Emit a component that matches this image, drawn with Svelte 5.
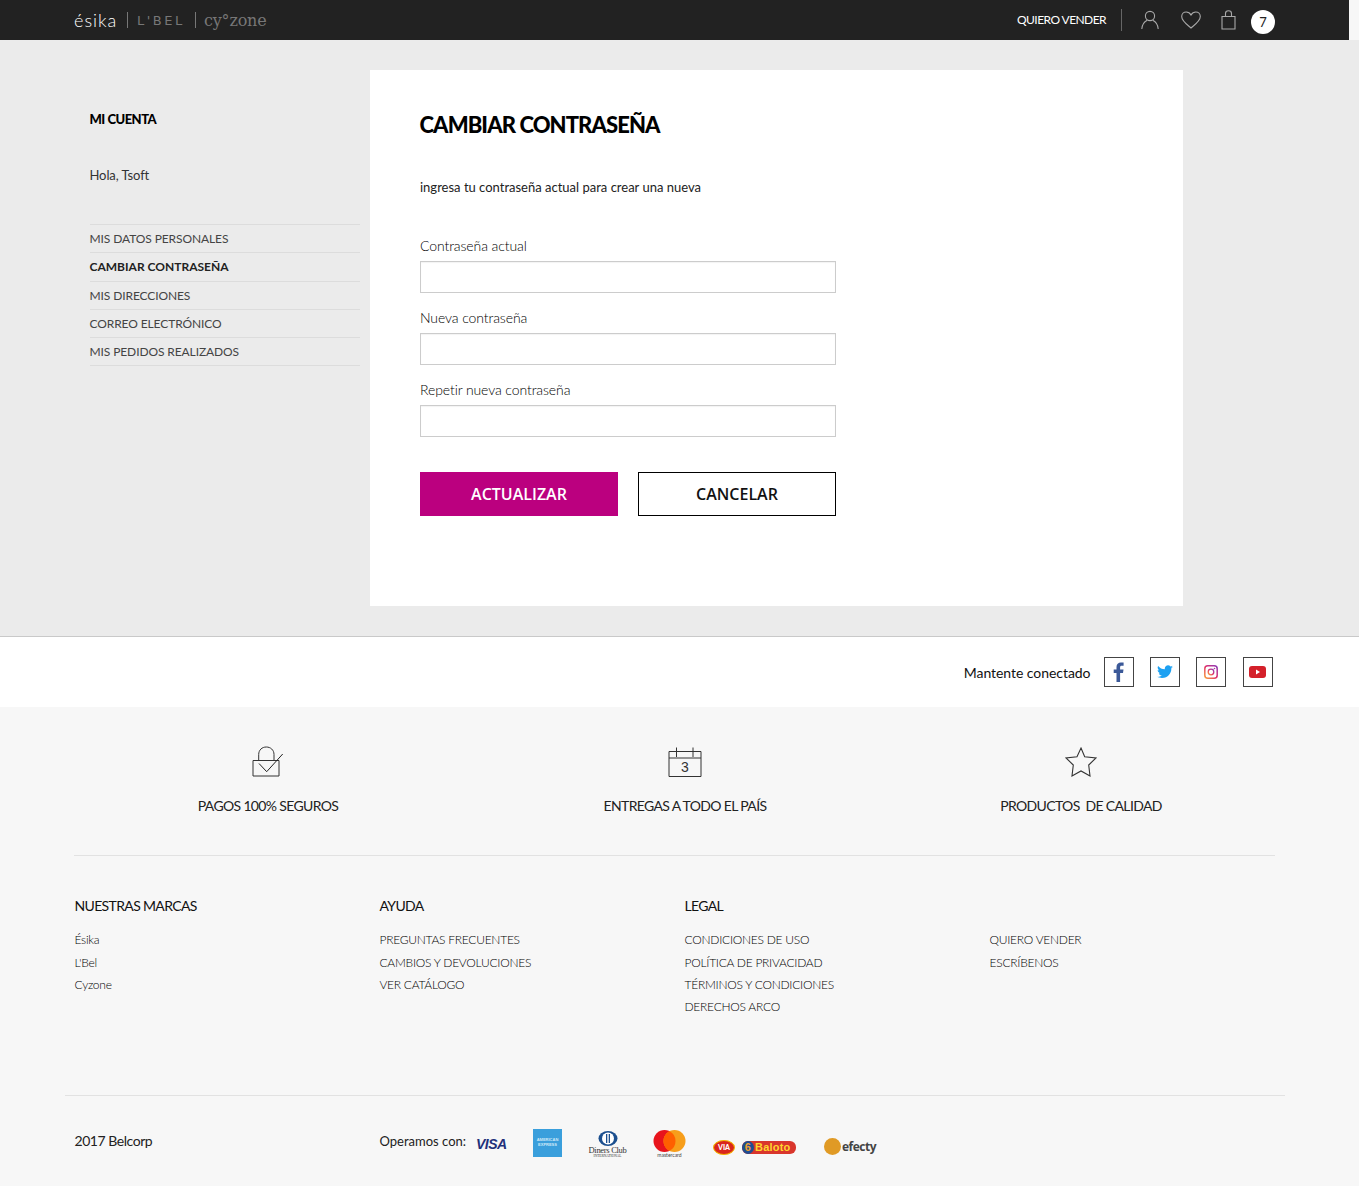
<script>
  const menu = [
    { label: 'MIS DATOS PERSONALES' },
    { label: 'CAMBIAR CONTRASEÑA', active: true },
    { label: 'MIS DIRECCIONES' },
    { label: 'CORREO ELECTRÓNICO' },
    { label: 'MIS PEDIDOS REALIZADOS' }
  ];
  const fields = ['Contraseña actual', 'Nueva contraseña', 'Repetir nueva contraseña'];
  const columns = [
    { title: 'NUESTRAS MARCAS', links: ['Ésika', "L'Bel", 'Cyzone'] },
    { title: 'AYUDA', links: ['PREGUNTAS FRECUENTES', 'CAMBIOS Y DEVOLUCIONES', 'VER CATÁLOGO'] },
    { title: 'LEGAL', links: ['CONDICIONES DE USO', 'POLÍTICA DE PRIVACIDAD', 'TÉRMINOS Y CONDICIONES', 'DERECHOS ARCO'] },
    { title: '', links: ['QUIERO VENDER', 'ESCRÍBENOS'] }
  ];
</script>

<header class="topbar">
  <div class="brands">
    <span class="esika">ésika</span>
    <span class="brand-sep"></span>
    <span class="lbel">L'BEL</span>
    <span class="brand-sep second"></span>
    <span class="cyzone">cy°zone</span>
  </div>
  <div class="tools">
    <span class="sell">QUIERO VENDER</span>
    <span class="tool-sep"></span>
    <svg class="user" width="18" height="20" viewBox="0 0 18 20" fill="none" stroke="#a9a9a9" stroke-width="1.1">
      <circle cx="9" cy="6" r="4.6" />
      <path d="M.8 19c.3-4.500 3-7.600 5.400-8.800M17.200 19c-.3-4.500-3-7.600-5.400-8.800" />
    </svg>
    <svg class="heart" width="20" height="18" viewBox="0 0 20 18" fill="none" stroke="#a9a9a9" stroke-width="1.1">
      <path d="M10 17C6 13.500.7 10 .7 5.500.7 2.800 2.800 1 5.200 1 7.200 1 9 2.200 10 4c1-1.800 2.800-3 4.800-3 2.400 0 4.500 1.800 4.500 4.500C19.300 10 14 13.500 10 17z" />
    </svg>
    <svg class="bag" width="15" height="20" viewBox="0 0 15 20" fill="none" stroke="#a9a9a9" stroke-width="1.1">
      <path d="M1 6.500h13V19H1zM4.500 6.500V3.500C4.500 1.800 5.800.8 7.500.8s3 1 3 2.700v3" />
    </svg>
    <span class="badge">7</span>
  </div>
</header>

<main class="page">
  <aside class="sidebar">
    <h3>MI CUENTA</h3>
    <p class="hello">Hola, Tsoft</p>
    <ul>
      {#each menu as item}
        <li class:active={item.active}>{item.label}</li>
      {/each}
    </ul>
  </aside>
  <section class="card">
    <h1>CAMBIAR CONTRASEÑA</h1>
    <p class="intro">ingresa tu contraseña actual para crear una nueva</p>
    <form class="form">
      {#each fields as field}
        <label>
          <span>{field}</span>
          <input type="password" />
        </label>
      {/each}
      <div class="actions">
        <button type="button" class="primary">ACTUALIZAR</button>
        <button type="button" class="secondary">CANCELAR</button>
      </div>
    </form>
  </section>
</main>

<div class="social">
  <span class="social-text">Mantente conectado</span>
  <span class="social-box">
    <svg width="12" height="20" viewBox="0 0 12 20"><path fill="#3b5998" d="M3.500 20v-9H.7V7.500h2.800V5c0-3 1.800-4.600 4.400-4.600 1.300 0 2.300.1 2.700.2v3.100H8.800c-1.400 0-1.700.7-1.700 1.700v2.100h3.400L10 11H7.100v9z" /></svg>
  </span>
  <span class="social-box">
    <svg width="16" height="14" viewBox="0 0 24 20"><path fill="#1da1f2" d="M24 2.400c-.9.400-1.800.7-2.800.8 1-.6 1.800-1.600 2.200-2.700-1 .6-2 1-3.100 1.200C19.300.7 18 0 16.600 0c-2.700 0-4.900 2.200-4.900 4.900 0 .4 0 .8.100 1.100C7.700 5.800 4.100 3.900 1.700.9c-.4.700-.7 1.600-.7 2.500 0 1.700.9 3.200 2.200 4.100-.8 0-1.600-.2-2.200-.6v.1c0 2.400 1.700 4.400 3.900 4.800-.4.100-.8.200-1.300.2-.3 0-.6 0-.9-.1.600 2 2.400 3.400 4.600 3.400-1.700 1.300-3.800 2.100-6.100 2.100-.4 0-.8 0-1.200-.1C2.200 18.300 4.800 19 7.500 19c9.100 0 14-7.500 14-14v-.6c1-.7 1.800-1.500 2.500-2z" /></svg>
  </span>
  <span class="social-box">
    <svg width="14" height="14" viewBox="0 0 14 14" fill="none">
      <defs><linearGradient id="ig" x1="0" y1="1" x2="1" y2="0"><stop offset="0" stop-color="#f9a13a" /><stop offset=".5" stop-color="#e1306c" /><stop offset="1" stop-color="#8a3ab9" /></linearGradient></defs>
      <rect x=".8" y=".8" width="12.400" height="12.400" rx="3" stroke="url(#ig)" stroke-width="1.500" />
      <circle cx="7" cy="7" r="2.800" stroke="url(#ig)" stroke-width="1.300" />
      <circle cx="10.500" cy="3.500" r=".8" fill="#b5359a" />
    </svg>
  </span>
  <span class="social-box last">
    <svg width="17" height="12" viewBox="0 0 17 12"><rect width="17" height="12" rx="3" fill="#d4202a" /><path d="M7 3.500v5l4-2.500z" fill="#fff" /></svg>
  </span>
</div>

<footer class="footer">
  <div class="features">
    <div class="feature">
      <svg width="32" height="32" viewBox="0 0 32 32" fill="none" stroke="#333" stroke-width="1">
        <path d="M1 14.500h26V30H1zM6.700 14.500V8.500C6.700 4 10 1 14.300 1S22 4 22 8.500v6" />
        <path d="M7 17.500l7.700 8.200L30.700 8" stroke="#222" />
      </svg>
      <span>PAGOS 100% SEGUROS</span>
    </div>
    <div class="feature">
      <svg width="34" height="32" viewBox="0 0 34 32" fill="none" stroke="#333" stroke-width="1">
        <path d="M1 5.500h32v25H1zM1 12h32M8.500 1.500V11M25 1.500V11" />
        <text x="17" y="25.500" text-anchor="middle" class="cal-num">3</text>
      </svg>
      <span>ENTREGAS A TODO EL PAÍS</span>
    </div>
    <div class="feature">
      <svg width="32" height="32" viewBox="0 0 32 32" fill="none" stroke="#333" stroke-width="1.100">
        <path d="M16 2l3.700 8.700L31 12l-7.300 7L25 30l-9-5-9 5 1.300-11L1 12l11-1.300z" />
      </svg>
      <span>PRODUCTOS&nbsp; DE CALIDAD</span>
    </div>
  </div>

  <div class="link-cols">
    {#each columns as col}
      <div class="link-col">
        <h4>{col.title}</h4>
        {#each col.links as link}
          <a href="#top">{link}</a>
        {/each}
      </div>
    {/each}
  </div>

  <div class="pay-row">
    <span class="copy">2017 Belcorp</span>
    <span class="operate">Operamos con:</span>
    <span class="visa">VISA</span>
    <span class="amex">AMERICAN<br />EXPRESS</span>
    <span class="diners">
      <svg width="20" height="15" viewBox="0 0 20 15"><ellipse cx="10" cy="7.500" rx="9.500" ry="7.500" fill="#1b4f8f" /><ellipse cx="10" cy="7.500" rx="6" ry="6" fill="#fff" /><path d="M8 3h1.300v9H8zM10.700 3H12v9h-1.300z" fill="#1b4f8f" /></svg>
      <b>Diners Club</b>
      <i>INTERNATIONAL</i>
    </span>
    <span class="master">
      <svg width="33" height="24" viewBox="0 0 33 24"><circle cx="11.500" cy="12" r="11" fill="#e8141c" /><circle cx="21.500" cy="12" r="11" fill="#f79e1b" /><path d="M16.500 2.200a11 11 0 0 1 0 19.600 11 11 0 0 1 0-19.600z" fill="#ff5f00" /></svg>
      <i>mastercard</i>
    </span>
    <span class="via">VIA</span>
    <span class="baloto"><b>6</b><span>Baloto</span></span>
    <span class="efecty"><i></i>efecty</span>
  </div>
</footer>

<style>
  :global(body) {
    background: #f7f7f7;
    font-family: Lato, 'Open Sans', sans-serif;
    color: #222;
  }

  .topbar {
    width: 1349px;
    height: 40px;
    box-sizing: border-box;
    background: #222;
    padding: 0 74px;
    display: flex;
    align-items: center;
    justify-content: space-between;
  }
  .brands {
    display: flex;
    align-items: center;
  }
  .esika {
    color: #fff;
    font-size: 18px;
    font-weight: 300;
    letter-spacing: 1px;
    width: 43px;
    line-height: 20px;
  }
  .brand-sep {
    width: 1px;
    height: 16px;
    background: #777;
    margin: 0 9px 0 10px;
  }
  .brand-sep.second {
    margin: 0 8px 0 10px;
  }
  .lbel {
    color: #777;
    font-size: 13px;
    letter-spacing: 2.5px;
    width: 48px;
    font-family: 'DejaVu Sans', sans-serif;
    white-space: nowrap;
  }
  .cyzone {
    color: #777;
    font-family: 'DejaVu Serif', serif;
    font-size: 16px;
    letter-spacing: -0.2px;
  }
  .tools {
    display: flex;
    align-items: center;
  }
  .sell {
    color: #fff;
    font-size: 12px;
    letter-spacing: -0.55px;
    width: 104px;
    margin-bottom: 1px;
  }
  .tool-sep {
    width: 1px;
    height: 22px;
    background: #666;
    margin-right: 19px;
  }
  .user {
    margin-right: 22px;
  }
  .heart {
    margin-right: 20px;
  }
  .bag {
    margin-right: 15px;
  }
  .badge {
    width: 24px;
    height: 24px;
    border-radius: 50%;
    background: #fff;
    color: #222;
    font-size: 13px;
    line-height: 24px;
    text-align: center;
    margin-top: 4px;
  }

  .page {
    background: #ebebeb;
    height: 596px;
    box-sizing: border-box;
    padding: 30px 176px 30px 89.5px;
    display: flex;
  }
  .sidebar {
    width: 270.5px;
    margin-right: 10px;
    padding-top: 42px;
  }
  .sidebar h3 {
    margin: 0;
    color: #000;
    font-size: 13px;
    font-weight: 900;
    letter-spacing: -0.5px;
    line-height: 14px;
  }
  .hello {
    margin: 41px 0 41.2px;
    font-size: 13px;
    line-height: 16px;
    color: #333;
    letter-spacing: -0.1px;
  }
  .sidebar ul {
    list-style: none;
    margin: 0;
    padding: 0;
    border-top: 1px solid #dcdcdc;
  }
  .sidebar li {
    height: 28.2px;
    box-sizing: border-box;
    border-bottom: 1px solid #dcdcdc;
    font-size: 12px;
    line-height: 27px;
    letter-spacing: -0.1px;
    color: #444;
  }
  .sidebar li.active {
    color: #222;
    font-weight: 700;
    letter-spacing: 0;
  }

  .card {
    flex: 1;
    background: #fff;
    padding: 42px 50px 0;
  }
  .card h1 {
    margin: 0 0 0 -0.5px;
    color: #000;
    font-size: 22px;
    line-height: 26px;
    font-weight: 900;
    letter-spacing: -0.9px;
  }
  .intro {
    margin: 41px 0 0;
    font-size: 13px;
    line-height: 16px;
    color: #222;
  }
  .form {
    width: 416px;
    margin-top: 42px;
  }
  label {
    display: block;
    margin-bottom: 16px;
  }
  label span {
    display: block;
    font-size: 14px;
    line-height: 18px;
    font-weight: 300;
    color: #000;
    letter-spacing: -0.1px;
    margin-bottom: 6px;
  }
  input {
    display: block;
    width: 100%;
    height: 32px;
    box-sizing: border-box;
    border: 1px solid #ccc;
    box-shadow: inset 0 1px 1px rgba(0, 0, 0, 0.05);
    background: #fff;
  }
  .actions {
    display: flex;
    gap: 20px;
    margin-top: 35px;
  }
  button {
    width: 198px;
    height: 44px;
    box-sizing: border-box;
    font-family: 'Open Sans', sans-serif;
    font-size: 16px;
    font-weight: 600;
  }
  .primary {
    background: #bb007f;
    border: 0;
    color: #fff;
  }
  .secondary {
    background: #fff;
    border: 1px solid #000;
    color: #111;
  }

  .social {
    height: 71px;
    box-sizing: border-box;
    background: #fff;
    border-top: 1px solid #c9c9c9;
    display: flex;
    align-items: center;
    padding-right: 86.5px;
    justify-content: flex-end;
    gap: 16px;
  }
  .social-text {
    font-size: 14px;
    color: #111;
    letter-spacing: -0.05px;
    margin-right: -3px;
  }
  .social-box {
    width: 30px;
    height: 30px;
    box-sizing: border-box;
    border: 1px solid #444;
    display: flex;
    align-items: center;
    justify-content: center;
  }
  .social-box.last {
    margin-left: 1px;
  }

  .footer {
    background: #f7f7f7;
    height: 479px;
    box-sizing: border-box;
    padding-top: 39px;
  }
  .features {
    margin: 0 84px 0 74px;
    height: 109px;
    border-bottom: 1px solid #e2e2e2;
    display: grid;
    grid-template-columns: 388px 446px 346px;
  }
  .feature {
    display: flex;
    flex-direction: column;
    align-items: center;
    font-size: 14px;
    letter-spacing: -0.65px;
    color: #222;
    white-space: nowrap;
  }
  .feature svg {
    margin-bottom: 19px;
  }
  .feature span {
    line-height: 18px;
  }
  .cal-num {
    font-family: 'Liberation Sans', sans-serif;
    font-size: 14px;
    fill: #333;
    stroke: none;
    letter-spacing: 0;
  }

  .link-cols {
    margin: 41px 0 0 74.5px;
    height: 198px;
    display: grid;
    grid-template-columns: repeat(4, 305px);
  }
  .link-col {
    display: flex;
    flex-direction: column;
    align-items: flex-start;
  }
  .link-col h4 {
    margin: 0 0 14.2px;
    height: 18px;
    font-size: 14px;
    line-height: 18px;
    font-weight: 400;
    color: #111;
    letter-spacing: -0.65px;
  }
  .link-col a {
    font-size: 12px;
    line-height: 22.4px;
    font-weight: 300;
    color: #000;
    letter-spacing: -0.25px;
    text-decoration: none;
  }

  .pay-row {
    margin: 0 74px 0 65px;
    width: 1220px;
    height: 91px;
    box-sizing: border-box;
    border-top: 1px solid #e2e2e2;
    padding: 36px 0 0 9.5px;
    display: flex;
    align-items: flex-start;
    font-size: 14px;
    color: #222;
  }
  .copy {
    width: 305px;
    line-height: 18px;
    letter-spacing: -0.45px;
  }
  .operate {
    width: 96.5px;
    font-size: 13px;
    line-height: 18px;
  }
  .visa {
    width: 57px;
    margin-top: 3px;
    font-family: 'Liberation Sans', sans-serif;
    font-size: 14px;
    line-height: 18px;
    font-weight: 700;
    font-style: italic;
    color: #22307a;
    letter-spacing: -0.5px;
  }
  .amex {
    width: 29px;
    height: 28px;
    margin-top: -3px;
    margin-right: 27px;
    box-sizing: border-box;
    padding-top: 8px;
    background: #3a9fdc;
    color: #cfe9f8;
    font-family: 'Liberation Sans', sans-serif;
    font-size: 4px;
    line-height: 5px;
    font-weight: 700;
    text-align: center;
    overflow: hidden;
  }
  .diners {
    width: 37px;
    margin-top: -1px;
    margin-right: 27px;
    display: flex;
    flex-direction: column;
    align-items: center;
    color: #333;
    white-space: nowrap;
  }
  .diners b {
    font-family: 'Liberation Serif', serif;
    font-size: 8.5px;
    line-height: 8px;
    font-weight: 400;
    letter-spacing: -0.3px;
  }
  .diners i {
    font-family: 'Liberation Serif', serif;
    font-size: 3.5px;
    line-height: 4px;
    font-style: normal;
  }
  .master {
    width: 33px;
    margin-top: -3px;
    margin-right: 27px;
    display: flex;
    flex-direction: column;
    align-items: center;
  }
  .master i {
    font-size: 5px;
    line-height: 5px;
    font-style: normal;
    color: #444;
  }
  .via {
    width: 22px;
    height: 15px;
    margin-top: 8px;
    margin-right: 7px;
    border-radius: 50%;
    background: #d9261c;
    border: 1px solid #f4b400;
    box-sizing: border-box;
    color: #fff;
    font-size: 7px;
    line-height: 13px;
    font-weight: 900;
    text-align: center;
  }
  .baloto {
    display: flex;
    align-items: center;
    width: 54px;
    height: 13px;
    margin-top: 9px;
    margin-right: 28px;
    border-radius: 6px;
    background: #d9362c;
    font-family: 'Liberation Sans', sans-serif;
    font-size: 11px;
    line-height: 13px;
    font-weight: 700;
    color: #ffd52e;
    letter-spacing: 0.2px;
  }
  .baloto b {
    width: 12px;
    height: 13px;
    border-radius: 50%;
    background: #1f4d92;
    color: #f0a030;
    text-align: center;
    margin-right: 1px;
  }
  .efecty {
    display: flex;
    align-items: center;
    margin-top: 6px;
    font-family: 'Open Sans', sans-serif;
    font-size: 12px;
    line-height: 16px;
    font-weight: 700;
    color: #444;
    letter-spacing: -0.5px;
  }
  .efecty i {
    width: 17px;
    height: 17px;
    border-radius: 50%;
    background: #e09a25;
    margin-right: 1px;
  }
</style>
